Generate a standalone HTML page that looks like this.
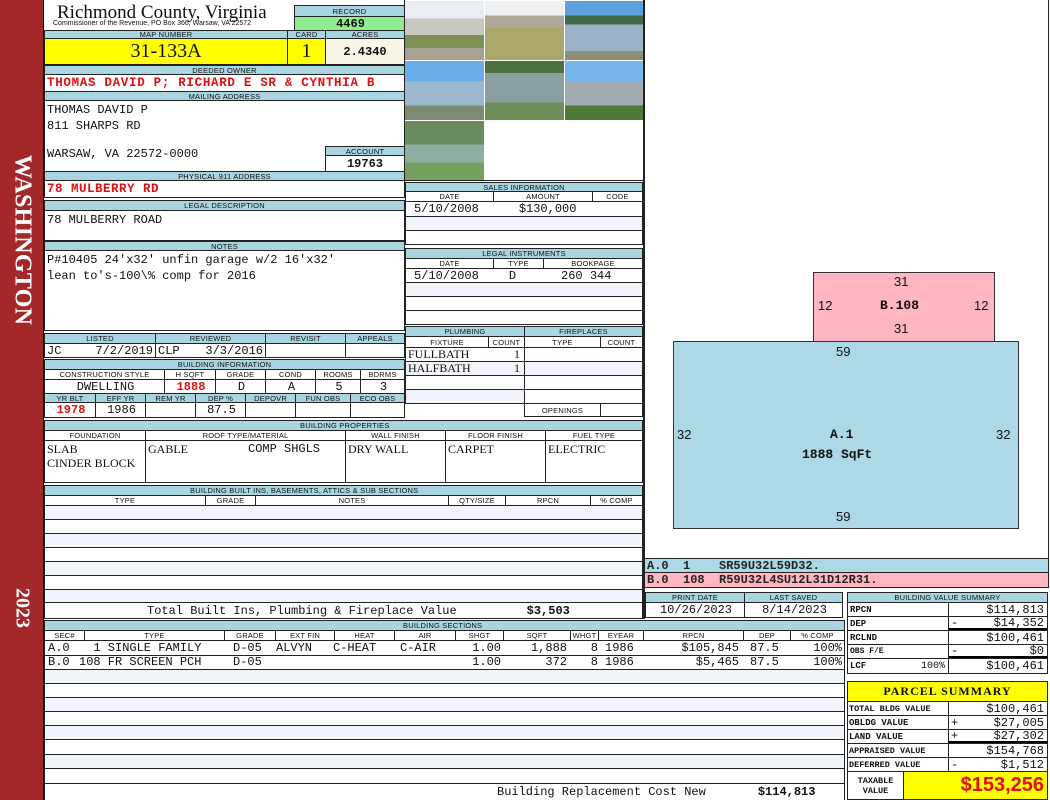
<!DOCTYPE html>
<html><head><meta charset="utf-8"><style>
*{margin:0;padding:0}
body{width:1050px;height:800px;position:relative;background:#fff;overflow:hidden;font-family:"Liberation Mono",monospace;color:#111}
.b{position:absolute;box-sizing:border-box;border:1px solid #222;overflow:hidden;white-space:nowrap;display:flex;align-items:center}
.h{background:#a9d5e0;font:7.5px "Liberation Sans",sans-serif;justify-content:center;letter-spacing:0.2px}
.v{font-size:12px;padding-left:2px}
.c{justify-content:center}
.r{justify-content:flex-end;padding-right:3px}
.red{color:#e01010;font-weight:bold}
.t{position:absolute;white-space:nowrap}
.alt{background:#f1f4f8}
.n{font:13px "Liberation Sans",sans-serif;position:absolute}
.ph{position:absolute;width:79px;height:59px}
</style></head><body>
<!-- sidebar -->
<div style="position:absolute;left:0;top:0;width:43px;height:800px;background:#a3282a;border-right:1px solid #000"></div>
<div class="t" style="left:22px;top:240px;transform:translate(-50%,-50%) rotate(90deg);color:#fff;font:bold 24px 'Liberation Serif',serif;letter-spacing:0.3px">WASHINGTON</div>
<div class="t" style="left:22px;top:608px;transform:translate(-50%,-50%) rotate(90deg);color:#fff;font:bold 20px 'Liberation Serif',serif">2023</div>

<!-- header -->
<div class="t" style="left:57px;top:2px;font:19px 'Liberation Serif',serif">Richmond County, Virginia</div>
<div class="t" style="left:53px;top:20px;font:7px 'Liberation Sans',sans-serif">Commissioner of the Revenue, PO Box 366, Warsaw, VA 22572</div>
<div class="b h" style="left:294px;top:5px;width:111px;height:12px">RECORD</div>
<div class="b v c" style="left:294px;top:16px;width:111px;height:15px;background:#90ee90;font-weight:bold">4469</div>
<div class="b h" style="left:44px;top:30px;width:244px;height:9px">MAP NUMBER</div>
<div class="b h" style="left:287px;top:30px;width:39px;height:9px">CARD</div>
<div class="b h" style="left:325px;top:30px;width:80px;height:9px">ACRES</div>
<div class="b c" style="left:44px;top:38px;width:244px;height:27px;background:#ffff00;font:20px 'Liberation Serif',serif">31-133A</div>
<div class="b c" style="left:287px;top:38px;width:39px;height:27px;background:#ffff00;font:20px 'Liberation Serif',serif">1</div>
<div class="b c" style="left:325px;top:38px;width:80px;height:27px;background:#f6f5e6;font-size:12px;font-weight:bold">2.4340</div>
<div class="b h" style="left:44px;top:65px;width:361px;height:10px">DEEDED OWNER</div>
<div class="b v red" style="left:44px;top:74px;width:361px;height:18px;font-size:12.5px;letter-spacing:0.7px">THOMAS DAVID P; RICHARD E SR &amp; CYNTHIA B</div>
<div class="b h" style="left:44px;top:91px;width:361px;height:10px">MAILING ADDRESS</div>
<div class="b" style="left:44px;top:100px;width:361px;height:72px"></div>
<div class="t" style="left:47px;top:102px;font-size:12px;line-height:16px">THOMAS DAVID P<br>811 SHARPS RD</div>
<div class="t" style="left:47px;top:147px;font-size:12px">WARSAW, VA 22572-0000</div>
<div class="b h" style="left:325px;top:146px;width:80px;height:10px">ACCOUNT</div>
<div class="b c" style="left:325px;top:155px;width:80px;height:17px;font-size:12px;font-weight:bold">19763</div>
<div class="b h" style="left:44px;top:171px;width:361px;height:10px">PHYSICAL 911 ADDRESS</div>
<div class="b v red" style="left:44px;top:180px;width:361px;height:18px;font-size:12.5px;letter-spacing:0.5px">78 MULBERRY RD</div>
<div class="b h" style="left:44px;top:200px;width:361px;height:11px">LEGAL DESCRIPTION</div>
<div class="b" style="left:44px;top:210px;width:361px;height:31px;align-items:flex-start"><span class="v" style="padding-top:2px">78 MULBERRY ROAD</span></div>
<div class="b h" style="left:44px;top:241px;width:361px;height:10px">NOTES</div>
<div class="b" style="left:44px;top:250px;width:361px;height:81px;align-items:flex-start"><span class="v" style="line-height:16px;padding-top:1px">P#10405 24'x32' unfin garage w/2 16'x32'<br>lean to's-100\% comp for 2016</span></div>

<!-- listed -->
<div class="b h" style="left:44px;top:333px;width:112px;height:11px">LISTED</div>
<div class="b h" style="left:155px;top:333px;width:111px;height:11px">REVIEWED</div>
<div class="b h" style="left:265px;top:333px;width:81px;height:11px">REVISIT</div>
<div class="b h" style="left:345px;top:333px;width:60px;height:11px">APPEALS</div>
<div class="b v" style="left:44px;top:343px;width:112px;height:15px;justify-content:space-between;padding-right:2px"><span>JC</span><span>7/2/2019</span></div>
<div class="b v" style="left:155px;top:343px;width:111px;height:15px;justify-content:space-between;padding-right:2px"><span>CLP</span><span>3/3/2016</span></div>
<div class="b" style="left:265px;top:343px;width:81px;height:15px"></div>
<div class="b" style="left:345px;top:343px;width:60px;height:15px"></div>

<!-- building info -->
<div class="b h" style="left:44px;top:359px;width:361px;height:11px">BUILDING INFORMATION</div>
<div class="b h" style="left:44px;top:369px;width:121px;height:11px;background:#fff">CONSTRUCTION STYLE</div>
<div class="b h" style="left:164px;top:369px;width:52px;height:11px;background:#fff">H SQFT</div>
<div class="b h" style="left:215px;top:369px;width:51px;height:11px;background:#fff">GRADE</div>
<div class="b h" style="left:265px;top:369px;width:51px;height:11px;background:#fff">COND</div>
<div class="b h" style="left:315px;top:369px;width:46px;height:11px;background:#fff">ROOMS</div>
<div class="b h" style="left:360px;top:369px;width:45px;height:11px;background:#fff">BDRMS</div>
<div class="b v c" style="left:44px;top:379px;width:121px;height:15px">DWELLING</div>
<div class="b v c red" style="left:164px;top:379px;width:52px;height:15px">1888</div>
<div class="b v c" style="left:215px;top:379px;width:51px;height:15px">D</div>
<div class="b v c" style="left:265px;top:379px;width:51px;height:15px">A</div>
<div class="b v c" style="left:315px;top:379px;width:46px;height:15px">5</div>
<div class="b v c" style="left:360px;top:379px;width:45px;height:15px">3</div>
<div class="b h" style="left:44px;top:393px;width:52px;height:10px">YR BLT</div>
<div class="b h" style="left:95px;top:393px;width:51px;height:10px">EFF YR</div>
<div class="b h" style="left:145px;top:393px;width:51px;height:10px">REM YR</div>
<div class="b h" style="left:195px;top:393px;width:51px;height:10px">DEP %</div>
<div class="b h" style="left:245px;top:393px;width:51px;height:10px">DEPOVR</div>
<div class="b h" style="left:295px;top:393px;width:56px;height:10px">FUN OBS</div>
<div class="b h" style="left:350px;top:393px;width:55px;height:10px">ECO OBS</div>
<div class="b v c red" style="left:44px;top:402px;width:52px;height:16px">1978</div>
<div class="b v c" style="left:95px;top:402px;width:51px;height:16px">1986</div>
<div class="b" style="left:145px;top:402px;width:51px;height:16px"></div>
<div class="b v c" style="left:195px;top:402px;width:51px;height:16px">87.5</div>
<div class="b" style="left:245px;top:402px;width:51px;height:16px"></div>
<div class="b" style="left:295px;top:402px;width:56px;height:16px"></div>
<div class="b" style="left:350px;top:402px;width:55px;height:16px"></div>

<!-- photos -->
<div class="ph" style="left:405px;top:1px;background:linear-gradient(#e8eef4 0 30%,#c8c8c0 30% 58%,#7d8f55 58% 80%,#a8a090 80%)"></div>
<div class="ph" style="left:485px;top:1px;background:linear-gradient(#eef0f2 0 25%,#b0a898 25% 45%,#a9a86a 45%)"></div>
<div class="ph" style="left:565px;top:1px;background:linear-gradient(#5da0dc 0 25%,#3f6a48 25% 40%,#9cb0c8 40% 85%,#8a9078 85%)"></div>
<div class="ph" style="left:405px;top:61px;background:linear-gradient(#6aaee8 0 35%,#9cb8d0 35% 75%,#7b8a70 75%)"></div>
<div class="ph" style="left:485px;top:61px;background:linear-gradient(#4d7040 0 20%,#8aa0a0 20% 70%,#6e8e58 70%)"></div>
<div class="ph" style="left:565px;top:61px;background:linear-gradient(#78b4ec 0 35%,#a0aab0 35% 75%,#4e7a38 75%)"></div>
<div class="ph" style="left:405px;top:121px;background:linear-gradient(#6c8a60 0 40%,#8cb0a0 40% 70%,#76a060 70%)"></div>
<div style="position:absolute;left:404px;top:0;width:1px;height:182px;background:#222"></div>
<div style="position:absolute;left:643px;top:0;width:2px;height:619px;background:#222"></div>

<!-- sales -->
<div class="b" style="left:405px;top:180px;width:239px;height:3px;border-width:1px 0 0 0"></div>
<div class="b h" style="left:405px;top:182px;width:238px;height:10px">SALES INFORMATION</div>
<div class="b h" style="left:405px;top:191px;width:89px;height:11px;background:#fff">DATE</div>
<div class="b h" style="left:493px;top:191px;width:100px;height:11px;background:#fff">AMOUNT</div>
<div class="b h" style="left:592px;top:191px;width:51px;height:11px;background:#fff">CODE</div>
<div class="b v" style="left:405px;top:201px;width:238px;height:16px"><span style="margin-left:6px">5/10/2008</span><span style="margin-left:40px">$130,000</span></div>
<div class="b alt" style="left:405px;top:216px;width:238px;height:15px"></div>
<div class="b" style="left:405px;top:230px;width:238px;height:15px"></div>
<div class="b h" style="left:405px;top:248px;width:238px;height:11px">LEGAL INSTRUMENTS</div>
<div class="b h" style="left:405px;top:258px;width:89px;height:11px;background:#fff">DATE</div>
<div class="b h" style="left:493px;top:258px;width:51px;height:11px;background:#fff">TYPE</div>
<div class="b h" style="left:543px;top:258px;width:100px;height:11px;background:#fff">BOOKPAGE</div>
<div class="b v" style="left:405px;top:268px;width:238px;height:15px"><span style="margin-left:6px">5/10/2008</span><span style="margin-left:30px">D</span><span style="margin-left:45px">260 344</span></div>
<div class="b alt" style="left:405px;top:282px;width:238px;height:15px"></div>
<div class="b" style="left:405px;top:296px;width:238px;height:15px"></div>
<div class="b" style="left:405px;top:310px;width:238px;height:15px"></div>
<div class="b h" style="left:405px;top:326px;width:120px;height:11px">PLUMBING</div>
<div class="b h" style="left:524px;top:326px;width:119px;height:11px">FIREPLACES</div>
<div class="b h" style="left:405px;top:336px;width:84px;height:12px;background:#fff">FIXTURE</div>
<div class="b h" style="left:488px;top:336px;width:37px;height:12px;background:#fff">COUNT</div>
<div class="b h" style="left:524px;top:336px;width:77px;height:12px;background:#fff">TYPE</div>
<div class="b h" style="left:600px;top:336px;width:43px;height:12px;background:#fff">COUNT</div>
<div class="b v" style="left:405px;top:347px;width:120px;height:15px;font-family:'Liberation Serif',serif;justify-content:space-between;padding-right:4px"><span>FULLBATH</span><span>1</span></div>
<div class="b v alt" style="left:405px;top:361px;width:120px;height:15px;font-family:'Liberation Serif',serif;justify-content:space-between;padding-right:4px"><span>HALFBATH</span><span>1</span></div>
<div class="b" style="left:405px;top:375px;width:120px;height:15px"></div>
<div class="b alt" style="left:405px;top:389px;width:120px;height:15px"></div>
<div class="b" style="left:524px;top:347px;width:119px;height:15px"></div>
<div class="b alt" style="left:524px;top:361px;width:119px;height:15px"></div>
<div class="b" style="left:524px;top:375px;width:119px;height:15px"></div>
<div class="b" style="left:524px;top:389px;width:119px;height:15px"></div>
<div class="b h" style="left:524px;top:403px;width:77px;height:14px;background:#fff">OPENINGS</div>
<div class="b" style="left:600px;top:403px;width:43px;height:14px"></div>

<!-- building properties -->
<div class="b h" style="left:44px;top:420px;width:599px;height:11px;justify-content:flex-start;padding-left:255px">BUILDING PROPERTIES</div>
<div class="b h" style="left:44px;top:430px;width:102px;height:11px;background:#fff">FOUNDATION</div>
<div class="b h" style="left:145px;top:430px;width:201px;height:11px;background:#fff">ROOF TYPE/MATERIAL</div>
<div class="b h" style="left:345px;top:430px;width:101px;height:11px;background:#fff">WALL FINISH</div>
<div class="b h" style="left:445px;top:430px;width:101px;height:11px;background:#fff">FLOOR FINISH</div>
<div class="b h" style="left:545px;top:430px;width:98px;height:11px;background:#fff">FUEL TYPE</div>
<div class="b" style="left:44px;top:440px;width:102px;height:43px;align-items:flex-start"><span class="v" style="line-height:14px;padding-top:1px;font-family:'Liberation Serif',serif">SLAB<br>CINDER BLOCK</span></div>
<div class="b" style="left:145px;top:440px;width:201px;height:43px;align-items:flex-start"><span class="v" style="padding-top:1px;font-family:'Liberation Serif',serif">GABLE</span><span class="v" style="padding-top:1px;margin-left:58px">COMP SHGLS</span></div>
<div class="b" style="left:345px;top:440px;width:101px;height:43px;align-items:flex-start"><span class="v" style="padding-top:1px;font-family:'Liberation Serif',serif">DRY WALL</span></div>
<div class="b" style="left:445px;top:440px;width:101px;height:43px;align-items:flex-start"><span class="v" style="padding-top:1px;font-family:'Liberation Serif',serif">CARPET</span></div>
<div class="b" style="left:545px;top:440px;width:98px;height:43px;align-items:flex-start"><span class="v" style="padding-top:1px;font-family:'Liberation Serif',serif">ELECTRIC</span></div>

<!-- built ins -->
<div class="b h" style="left:44px;top:485px;width:599px;height:11px;justify-content:flex-start;padding-left:145px">BUILDING BUILT INS, BASEMENTS, ATTICS &amp; SUB SECTIONS</div>
<div class="b h" style="left:44px;top:495px;width:162px;height:11px;background:#fff">TYPE</div>
<div class="b h" style="left:205px;top:495px;width:51px;height:11px;background:#fff">GRADE</div>
<div class="b h" style="left:255px;top:495px;width:194px;height:11px;background:#fff">NOTES</div>
<div class="b h" style="left:448px;top:495px;width:58px;height:11px;background:#fff">QTY/SIZE</div>
<div class="b h" style="left:505px;top:495px;width:86px;height:11px;background:#fff">RPCN</div>
<div class="b h" style="left:590px;top:495px;width:53px;height:11px;background:#fff">% COMP</div>
<div class="b alt" style="left:44px;top:505px;width:599px;height:15px"></div>
<div class="b" style="left:44px;top:519px;width:599px;height:15px"></div>
<div class="b alt" style="left:44px;top:533px;width:599px;height:15px"></div>
<div class="b" style="left:44px;top:547px;width:599px;height:15px"></div>
<div class="b alt" style="left:44px;top:561px;width:599px;height:15px"></div>
<div class="b" style="left:44px;top:575px;width:599px;height:15px"></div>
<div class="b alt" style="left:44px;top:589px;width:599px;height:14px"></div>
<div class="b v" style="left:44px;top:602px;width:599px;height:17px"><span style="margin-left:100px">Total Built Ins, Plumbing &amp; Fireplace Value</span><span style="margin-left:70px;font-weight:bold">$3,503</span></div>

<!-- building sections -->
<div class="b h" style="left:44px;top:620px;width:801px;height:11px;justify-content:flex-start;padding-left:358px">BUILDING SECTIONS</div>
<div class="b h" style="left:44px;top:630px;width:41px;height:11px;background:#fff">SEC#</div>
<div class="b h" style="left:84px;top:630px;width:141px;height:11px;background:#fff">TYPE</div>
<div class="b h" style="left:224px;top:630px;width:52px;height:11px;background:#fff">GRADE</div>
<div class="b h" style="left:275px;top:630px;width:60px;height:11px;background:#fff">EXT FIN</div>
<div class="b h" style="left:334px;top:630px;width:61px;height:11px;background:#fff">HEAT</div>
<div class="b h" style="left:394px;top:630px;width:62px;height:11px;background:#fff">AIR</div>
<div class="b h" style="left:455px;top:630px;width:49px;height:11px;background:#fff">SHGT</div>
<div class="b h" style="left:503px;top:630px;width:68px;height:11px;background:#fff">SQFT</div>
<div class="b h" style="left:570px;top:630px;width:29px;height:11px;background:#fff">WHGT</div>
<div class="b h" style="left:598px;top:630px;width:46px;height:11px;background:#fff">EYEAR</div>
<div class="b h" style="left:643px;top:630px;width:101px;height:11px;background:#fff">RPCN</div>
<div class="b h" style="left:743px;top:630px;width:48px;height:11px;background:#fff">DEP</div>
<div class="b h" style="left:790px;top:630px;width:55px;height:11px;background:#fff">% COMP</div>
<div class="b" style="left:44px;top:640px;width:801px;height:16px"></div>
<div class="b" style="left:44px;top:655px;width:801px;height:15px"></div>
<div class="t" style="left:48px;top:641px;font-size:12px;line-height:14px">A.0<br>B.0</div>
<div class="t" style="left:79px;top:641px;font-size:12px;line-height:14px">&nbsp;&nbsp;1 SINGLE FAMILY<br>108 FR SCREEN PCH</div>
<div class="t" style="left:233px;top:641px;font-size:12px;line-height:14px">D-05<br>D-05</div>
<div class="t" style="left:276px;top:641px;font-size:12px">ALVYN</div>
<div class="t" style="left:333px;top:641px;font-size:12px">C-HEAT</div>
<div class="t" style="left:400px;top:641px;font-size:12px">C-AIR</div>
<div class="t" style="left:456px;top:641px;width:45px;text-align:right;font-size:12px;line-height:14px">1.00<br>1.00</div>
<div class="t" style="left:503px;top:641px;width:64px;text-align:right;font-size:12px;line-height:14px">1,888<br>372</div>
<div class="t" style="left:570px;top:641px;width:28px;text-align:right;font-size:12px;line-height:14px">8<br>8</div>
<div class="t" style="left:605px;top:641px;font-size:12px;line-height:14px">1986<br>1986</div>
<div class="t" style="left:643px;top:641px;width:96px;text-align:right;font-size:12px;line-height:14px">$105,845<br>$5,465</div>
<div class="t" style="left:750px;top:641px;font-size:12px;line-height:14px">87.5<br>87.5</div>
<div class="t" style="left:790px;top:641px;width:52px;text-align:right;font-size:12px;line-height:14px">100%<br>100%</div>
<div class="b alt" style="left:44px;top:669px;width:801px;height:15px"></div>
<div class="b" style="left:44px;top:683px;width:801px;height:15px"></div>
<div class="b alt" style="left:44px;top:697px;width:801px;height:15px"></div>
<div class="b" style="left:44px;top:711px;width:801px;height:15px"></div>
<div class="b alt" style="left:44px;top:725px;width:801px;height:15px"></div>
<div class="b" style="left:44px;top:739px;width:801px;height:16px"></div>
<div class="b alt" style="left:44px;top:754px;width:801px;height:15px"></div>
<div class="b" style="left:44px;top:768px;width:801px;height:16px"></div>
<div class="b v" style="left:44px;top:783px;width:801px;height:17px;border-bottom:0"><span style="margin-left:450px">Building Replacement Cost New</span><span style="margin-left:52px;font-weight:bold">$114,813</span></div>

<!-- sketch -->
<div class="b" style="left:644px;top:0;width:405px;height:559px;border-width:0 1px 1px 0"></div>
<div style="position:absolute;left:813px;top:272px;width:182px;height:70px;background:#ffb6c1;border:1px solid #333;box-sizing:border-box"></div>
<div style="position:absolute;left:673px;top:341px;width:346px;height:188px;background:#add8e6;border:1px solid #333;box-sizing:border-box"></div>
<div class="n" style="left:894px;top:274px">31</div>
<div class="n" style="left:818px;top:298px">12</div>
<div class="t" style="left:880px;top:298px;font:bold 13px 'Liberation Mono',monospace">B.108</div>
<div class="n" style="left:974px;top:298px">12</div>
<div class="n" style="left:894px;top:321px">31</div>
<div class="n" style="left:836px;top:344px">59</div>
<div class="n" style="left:677px;top:427px">32</div>
<div class="t" style="left:830px;top:427px;font:bold 13px 'Liberation Mono',monospace">A.1</div>
<div class="t" style="left:802px;top:447px;font:bold 13px 'Liberation Mono',monospace">1888 SqFt</div>
<div class="n" style="left:996px;top:427px">32</div>
<div class="n" style="left:836px;top:509px">59</div>
<div class="b v" style="left:644px;top:558px;width:405px;height:15px;background:#add8e6;font-weight:bold;color:#222">A.0&nbsp;&nbsp;1&nbsp;&nbsp;&nbsp;&nbsp;SR59U32L59D32.</div>
<div class="b v" style="left:644px;top:572px;width:405px;height:16px;background:#ffb6c1;font-weight:bold;color:#222">B.0&nbsp;&nbsp;108&nbsp;&nbsp;R59U32L4SU12L31D12R31.</div>

<!-- print date -->
<div class="b h" style="left:645px;top:592px;width:100px;height:11px">PRINT DATE</div>
<div class="b h" style="left:744px;top:592px;width:99px;height:11px">LAST SAVED</div>
<div class="b v c" style="left:645px;top:602px;width:100px;height:16px">10/26/2023</div>
<div class="b v c" style="left:744px;top:602px;width:99px;height:16px">8/14/2023</div>

<!-- building value summary -->
<div class="b h" style="left:847px;top:592px;width:201px;height:11px">BUILDING VALUE SUMMARY</div>
<div class="b" style="left:847px;top:602px;width:102px;height:15px;font:9px 'Liberation Mono',monospace;padding-left:2px;font-weight:bold">RPCN</div>
<div class="b v r" style="left:948px;top:602px;width:100px;height:15px">$114,813</div>
<div class="b" style="left:847px;top:616px;width:102px;height:15px;font:9px 'Liberation Mono',monospace;padding-left:2px;font-weight:bold">DEP</div>
<div class="b v r" style="left:948px;top:616px;width:100px;height:15px;border-bottom:3px solid #000;justify-content:space-between">-<span>$14,352</span></div>
<div class="b" style="left:847px;top:630px;width:102px;height:15px;font:9px 'Liberation Mono',monospace;padding-left:2px;font-weight:bold">RCLND</div>
<div class="b v r" style="left:948px;top:630px;width:100px;height:15px">$100,461</div>
<div class="b" style="left:847px;top:644px;width:102px;height:15px;font:8px 'Liberation Mono',monospace;padding-left:2px;font-weight:bold">OBS F/E</div>
<div class="b v r" style="left:948px;top:644px;width:100px;height:15px;border-bottom:3px solid #000;justify-content:space-between">-<span>$0</span></div>
<div class="b" style="left:847px;top:658px;width:102px;height:16px;font-size:10px;padding:0 3px 0 2px;justify-content:space-between"><b style="font-size:9px">LCF</b><span>100%</span></div>
<div class="b v r" style="left:948px;top:658px;width:100px;height:16px">$100,461</div>

<!-- parcel summary -->
<div class="b c" style="left:847px;top:681px;width:201px;height:21px;background:#ffff00;font:bold 12px 'Liberation Serif',serif;letter-spacing:1px">PARCEL SUMMARY</div>
<div class="b" style="left:847px;top:701px;width:102px;height:15px;font:bold 8.5px 'Liberation Mono',monospace;padding-left:1px">TOTAL BLDG VALUE</div>
<div class="b v r" style="left:948px;top:701px;width:100px;height:15px">$100,461</div>
<div class="b" style="left:847px;top:715px;width:102px;height:15px;font:bold 9px 'Liberation Mono',monospace;padding-left:1px">OBLDG VALUE</div>
<div class="b v r" style="left:948px;top:715px;width:100px;height:15px;justify-content:space-between">+<span>$27,005</span></div>
<div class="b" style="left:847px;top:729px;width:102px;height:15px;font:bold 9px 'Liberation Mono',monospace;padding-left:1px">LAND VALUE</div>
<div class="b v r" style="left:948px;top:729px;width:100px;height:15px;border-bottom:3px solid #000;justify-content:space-between">+<span>$27,302</span></div>
<div class="b" style="left:847px;top:743px;width:102px;height:15px;font:bold 8.5px 'Liberation Mono',monospace;padding-left:1px">APPRAISED VALUE</div>
<div class="b v r" style="left:948px;top:743px;width:100px;height:15px">$154,768</div>
<div class="b" style="left:847px;top:757px;width:102px;height:15px;font:bold 8.5px 'Liberation Mono',monospace;padding-left:1px">DEFERRED VALUE</div>
<div class="b v r" style="left:948px;top:757px;width:100px;height:15px;justify-content:space-between">-<span>$1,512</span></div>
<div class="b c" style="left:847px;top:771px;width:57px;height:29px;font:bold 8.5px 'Liberation Mono',monospace;text-align:center;line-height:10px">TAXABLE<br>VALUE</div>
<div class="b r" style="left:903px;top:771px;width:145px;height:29px;background:#ffff00;color:#e01010;font:bold 20px 'Liberation Sans',sans-serif">$153,256</div>
</body></html>
